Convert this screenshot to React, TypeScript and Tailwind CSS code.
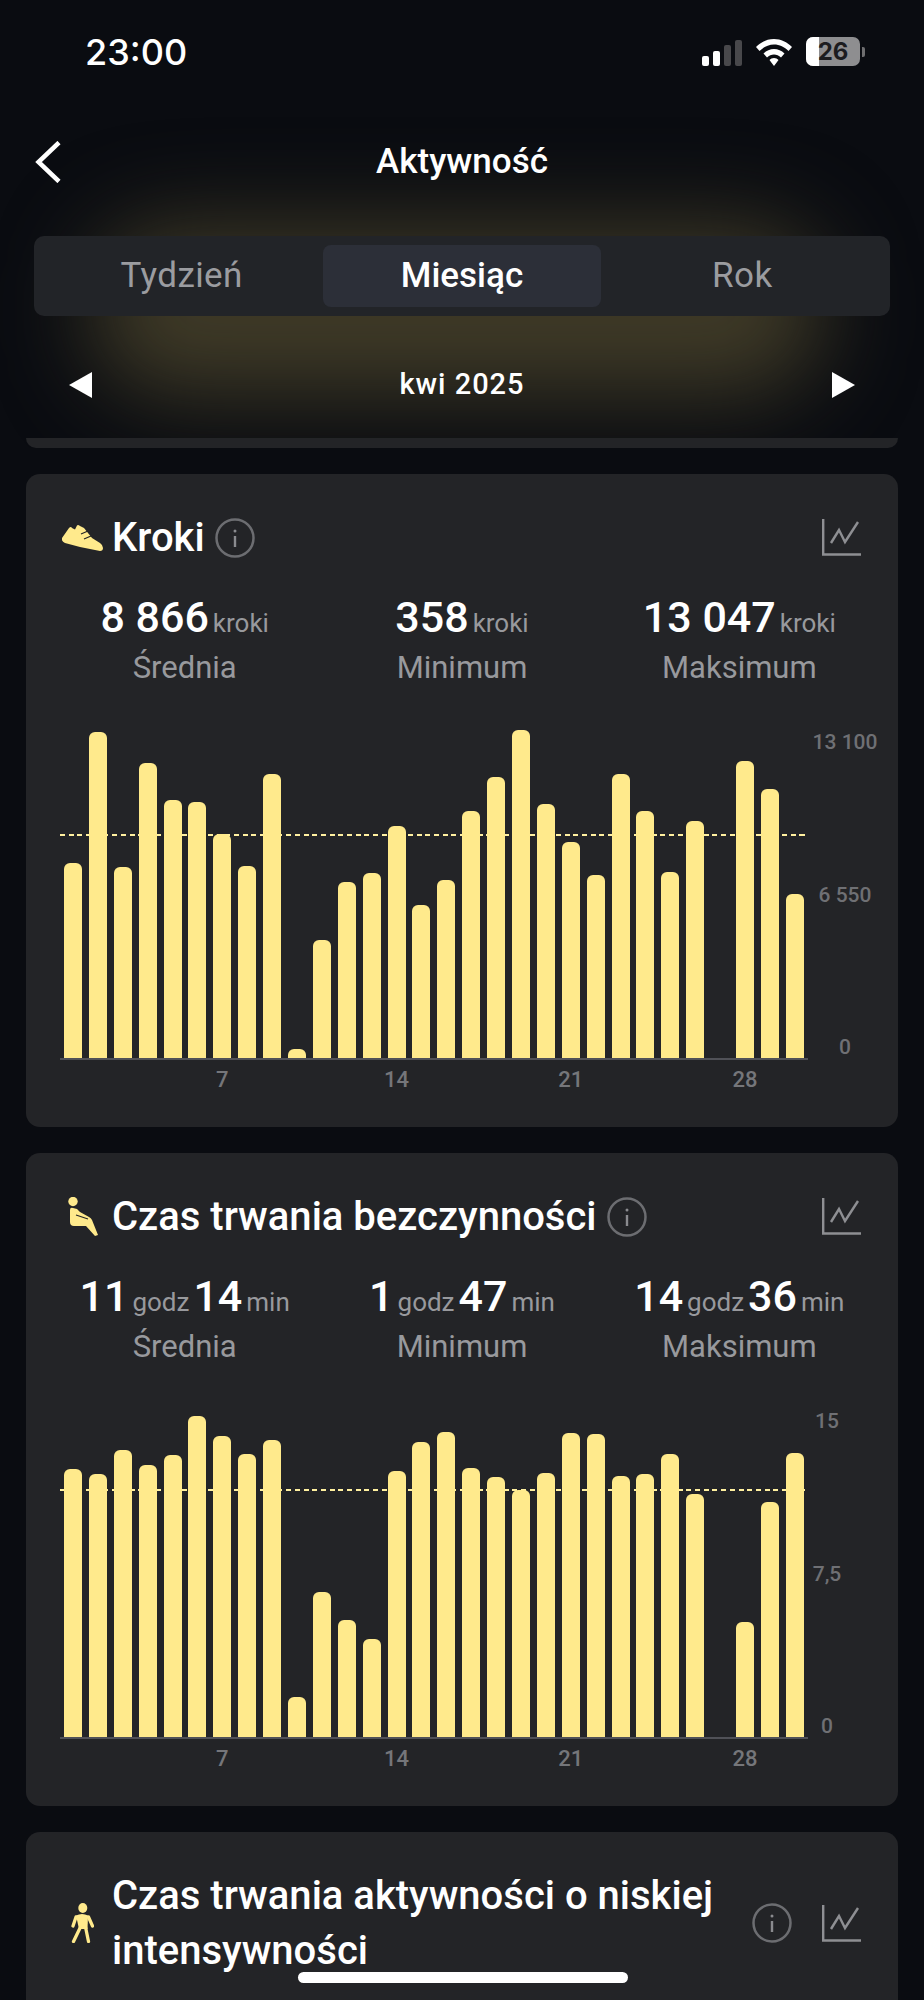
import { ReactNode } from "react";

const stepBars = [
  195, 326, 191, 295, 258, 256, 224, 192, 284, 9, 118, 176, 185, 232, 153, 178,
  247, 281, 328, 254, 216, 183, 284, 247, 186, 237, 0, 297, 269, 164,
];
const idleBars = [
  268, 263, 287, 272, 282, 321, 301, 283, 297, 40, 145, 117, 98, 266, 295, 305,
  269, 260, 247, 264, 304, 303, 261, 263, 283, 243, 0, 115, 235, 284,
];

function ShoeIcon() {
  return (
    <svg width="41" height="26" viewBox="0 0 41 26">
      <path
        d="M0 13 L7 3 Q9 1 10 3 L13 4.500 L15 0.500 Q16 -0.500 18 1 L22 3 L30 13 L38 18 Q41 20 41 23 Q41 26 38 26 L33 25 L18 22 L3 18 Q-1 16 0 13 Z"
        fill="#ffea8c"
      />
      <path d="M19 9 L26 6 M22 14 L29 11" stroke="#232427" strokeWidth="1.200" />
    </svg>
  );
}

function SeatedIcon() {
  return (
    <svg width="30" height="39" viewBox="0 0 30 39">
      <circle cx="5" cy="4.500" r="4.700" fill="#ffea8c" />
      <path
        d="M2 13 Q2 10 5 11 L9 12 L12 15 L21 20 Q23 21 24 23 L30 38 L27 39 L18 29 L6 29 Q2 29 2 25 Z"
        fill="#ffea8c"
      />
      <path d="M8 18 L20 22" stroke="#232427" strokeWidth="1.200" />
    </svg>
  );
}

function WalkIcon() {
  return (
    <svg width="23" height="40" viewBox="0 0 23 40">
      <ellipse cx="11.800" cy="5" rx="4.500" ry="5" fill="#ffea8c" />
      <path d="M5 12.500 Q11 9.500 17 12.500 L16.500 26 L8 26 Z" fill="#ffea8c" />
      <path
        d="M5 14 L2 23 M17.500 14 L21.500 23 M9.500 24 L2.500 38.500 M14.500 24 L17.500 38.500"
        stroke="#ffea8c"
        strokeWidth="3.300"
        strokeLinecap="round"
        fill="none"
      />
    </svg>
  );
}

function InfoIcon() {
  return (
    <svg width="40" height="40" viewBox="0 0 40 40" className="shrink-0">
      <circle cx="20" cy="20" r="18.500" fill="none" stroke="#6c6d71" strokeWidth="2.500" />
      <circle cx="20" cy="13" r="1.500" fill="#8a8b8f" />
      <path d="M20 18 V29" stroke="#8a8b8f" strokeWidth="2.400" />
    </svg>
  );
}

function ChartIcon() {
  return (
    <svg width="39" height="37" viewBox="0 0 39 37" className="shrink-0">
      <path d="M1.200 0 V35.500 H39" fill="none" stroke="#8e8f93" strokeWidth="2.400" />
      <path d="M9 24 L17 11 L23 23 L36 3" fill="none" stroke="#8e8f93" strokeWidth="2.400" />
    </svg>
  );
}

function StatusBar() {
  return (
    <div className="flex items-start justify-between pl-[85px] pr-[59px] pt-[33px]">
      <span className="font-['Inter',sans-serif] text-[36px] leading-[38px] font-medium text-white">
        23:00
      </span>
      <div className="flex items-end gap-[14px] pt-1">
        <div className="flex items-end gap-1 h-[26px]">
          <div className="w-[7px] h-[10px] rounded-[2px] bg-white" />
          <div className="w-[7px] h-[15px] rounded-[2px] bg-white" />
          <div className="w-[7px] h-[21px] rounded-[2px] bg-[#48484b]" />
          <div className="w-[7px] h-[26px] rounded-[2px] bg-[#48484b]" />
        </div>
        <svg width="36" height="27" viewBox="0 0 36 27">
          <path
            d="M18 0 C25 0 31 3 36 8 L32.500 12 C28.500 8 23.500 5.500 18 5.500 C12.500 5.500 7.500 8 3.500 12 L0 8 C5 3 11 0 18 0 Z M18 10 C22 10 25.500 11.500 28.500 14.500 L25 18.500 C23 16.500 20.500 15.500 18 15.500 C15.500 15.500 13 16.500 11 18.500 L7.500 14.500 C10.500 11.500 14 10 18 10 Z M18 19 C19.800 19 21.500 19.800 22.500 21 L18 27 L13.500 21 C14.500 19.800 16.200 19 18 19 Z"
            fill="white"
          />
        </svg>
        <div className="flex items-center gap-[2px]">
          <div className="relative w-[54px] h-[29px] rounded-[7px] overflow-hidden bg-[#8e8e90] flex items-center justify-center">
            <div className="absolute left-0 top-0 bottom-0 w-[13px] bg-white" />
            <span className="relative font-['Inter',sans-serif] text-[24px] leading-none font-bold text-[#1c1c1f]">
              26
            </span>
          </div>
          <div className="w-[3px] h-[10px] rounded-r-[2px] bg-[#6e6e70]" />
        </div>
      </div>
    </div>
  );
}

function Header() {
  const tabs = ["Tydzień", "Miesiąc", "Rok"];
  return (
    <div className="relative h-[448px] overflow-hidden">
      <div className="absolute left-[90px] right-[100px] top-[225px] h-[170px] rounded-[80px] bg-[#3f3a27] blur-[45px]" />
      <div className="relative">
        <StatusBar />
        <div className="relative flex items-center justify-center h-[42px] mt-[70px]">
          <svg width="26" height="42" viewBox="0 0 26 42" className="absolute left-[35px] top-[0px]">
            <path d="M24 1.500 L3.500 21 L24 40.500" fill="none" stroke="white" strokeWidth="4.500" />
          </svg>
          <span className="text-[35px] font-medium text-white">Aktywność</span>
        </div>
        <div className="mx-[34px] mt-[53px] h-[80px] rounded-[10px] bg-[#222428] px-[9px] py-[9px] grid grid-cols-3 gap-[3px]">
          {tabs.map((tab, index) => (
            <div
              key={tab}
              className={
                index === 1
                  ? "flex items-center justify-center rounded-[8px] bg-[#2c2f38] text-[35px] font-medium text-white"
                  : "flex items-center justify-center rounded-[8px] text-[35px] tracking-[0.4px] text-[#9b9ca0]"
              }
            >
              {tab}
            </div>
          ))}
        </div>
        <div className="flex items-center justify-between px-[69px] mt-[56px] h-[26px]">
          <div className="w-0 h-0 border-y-[13px] border-y-transparent border-r-[23px] border-r-white" />
          <span className="text-[29px] font-medium text-white tracking-[1px]">kwi 2025</span>
          <div className="w-0 h-0 border-y-[13px] border-y-transparent border-l-[23px] border-l-white" />
        </div>
        <div className="mx-[26px] mt-[40px] h-[10px] rounded-b-[14px] bg-[#232427]" />
      </div>
    </div>
  );
}

function CardTitle({ icon, title, wide }: { icon: ReactNode; title: string; wide?: boolean }) {
  return (
    <div className="flex items-center pt-9 pl-[34px] pr-[37px]">
      <div className="w-[45px] mr-[7px] flex justify-center shrink-0">{icon}</div>
      <div
        className={
          wide
            ? "w-[630px] text-[40px] leading-[55px] font-medium text-white"
            : "text-[40px] leading-[55px] font-medium text-white"
        }
      >
        {title}
      </div>
      <div className="ml-[10px]">
        <InfoIcon />
      </div>
      <div className="ml-auto">
        <ChartIcon />
      </div>
    </div>
  );
}

function Stat({ parts, label }: { parts: [string, string][]; label: string }) {
  return (
    <div className="flex flex-col items-center">
      <div className="flex items-baseline gap-[4px] leading-[52px]">
        {parts.map(([value, unit]) => (
          <span key={unit} className="flex items-baseline gap-[4px]">
            <span className="text-[43px] font-medium text-white">{value}</span>
            <span className="text-[26px] text-[#98999d]">{unit}</span>
          </span>
        ))}
      </div>
      <div className="text-[31px] leading-[37px] text-[#98999d]">{label}</div>
    </div>
  );
}

function BarChart({
  bars,
  average,
  axis,
  axisWidth,
}: {
  bars: number[];
  average: number;
  axis: string[];
  axisWidth: string;
}) {
  return (
    <div className="pl-[34px]">
      <div className="flex items-end">
        <div className="relative w-[748px] h-[340px] px-1 flex items-end justify-between border-b-2 border-[#505157]">
          <div
            className="absolute left-0 right-0 h-[2px] bg-[repeating-linear-gradient(to_right,#fff0a0_0_5px,transparent_5px_8.700px)]"
            style={{ bottom: average }}
          />
          {bars.map((height, index) => (
            <div
              key={index}
              className="relative w-[18px] rounded-t-[6px] bg-[#ffea8c]"
              style={{ height }}
            />
          ))}
        </div>
        <div
          className={`${axisWidth} h-[329px] mb-[1px] flex flex-col items-center justify-between text-[21px] leading-[24px] font-medium text-[#6f7074]`}
        >
          {axis.map((label) => (
            <span key={label} className="whitespace-nowrap">
              {label}
            </span>
          ))}
        </div>
      </div>
      <div className="w-[748px] px-1 flex justify-between pt-[8px]">
        {bars.map((_, index) => (
          <div
            key={index}
            className="w-[18px] flex justify-center text-[22px] leading-[24px] font-medium text-[#75767a]"
          >
            {(index + 1) % 7 === 0 ? index + 1 : ""}
          </div>
        ))}
      </div>
    </div>
  );
}

function Card({ children }: { children: ReactNode }) {
  return <div className="mx-[26px] h-[653px] rounded-[14px] bg-[#232427]">{children}</div>;
}

export default function App() {
  return (
    <div className="relative h-[2000px] overflow-hidden bg-[#0a0c11] font-['Roboto',sans-serif]">
      <Header />
      <div className="flex flex-col gap-[26px] pt-[26px]">
        <Card>
          <CardTitle icon={<ShoeIcon />} title="Kroki" />
          <div className="grid grid-cols-3 px-5 pt-[26px]">
            <Stat parts={[["8 866", "kroki"]]} label="Średnia" />
            <Stat parts={[["358", "kroki"]]} label="Minimum" />
            <Stat parts={[["13 047", "kroki"]]} label="Maksimum" />
          </div>
          <div className="pt-[34px]">
            <BarChart bars={stepBars} average={222} axis={["13 100", "6 550", "0"]} axisWidth="w-[74px]" />
          </div>
        </Card>
        <Card>
          <CardTitle icon={<SeatedIcon />} title="Czas trwania bezczynności" />
          <div className="grid grid-cols-3 px-5 pt-[26px]">
            <Stat parts={[["11", "godz"], ["14", "min"]]} label="Średnia" />
            <Stat parts={[["1", "godz"], ["47", "min"]]} label="Minimum" />
            <Stat parts={[["14", "godz"], ["36", "min"]]} label="Maksimum" />
          </div>
          <div className="pt-[34px]">
            <BarChart bars={idleBars} average={246} axis={["15", "7,5", "0"]} axisWidth="w-[38px]" />
          </div>
        </Card>
        <Card>
          <CardTitle icon={<WalkIcon />} title="Czas trwania aktywności o niskiej intensywności" wide />
        </Card>
      </div>
      <div className="absolute left-[298px] top-[1972px] w-[330px] h-[11px] rounded-full bg-white" />
    </div>
  );
}
